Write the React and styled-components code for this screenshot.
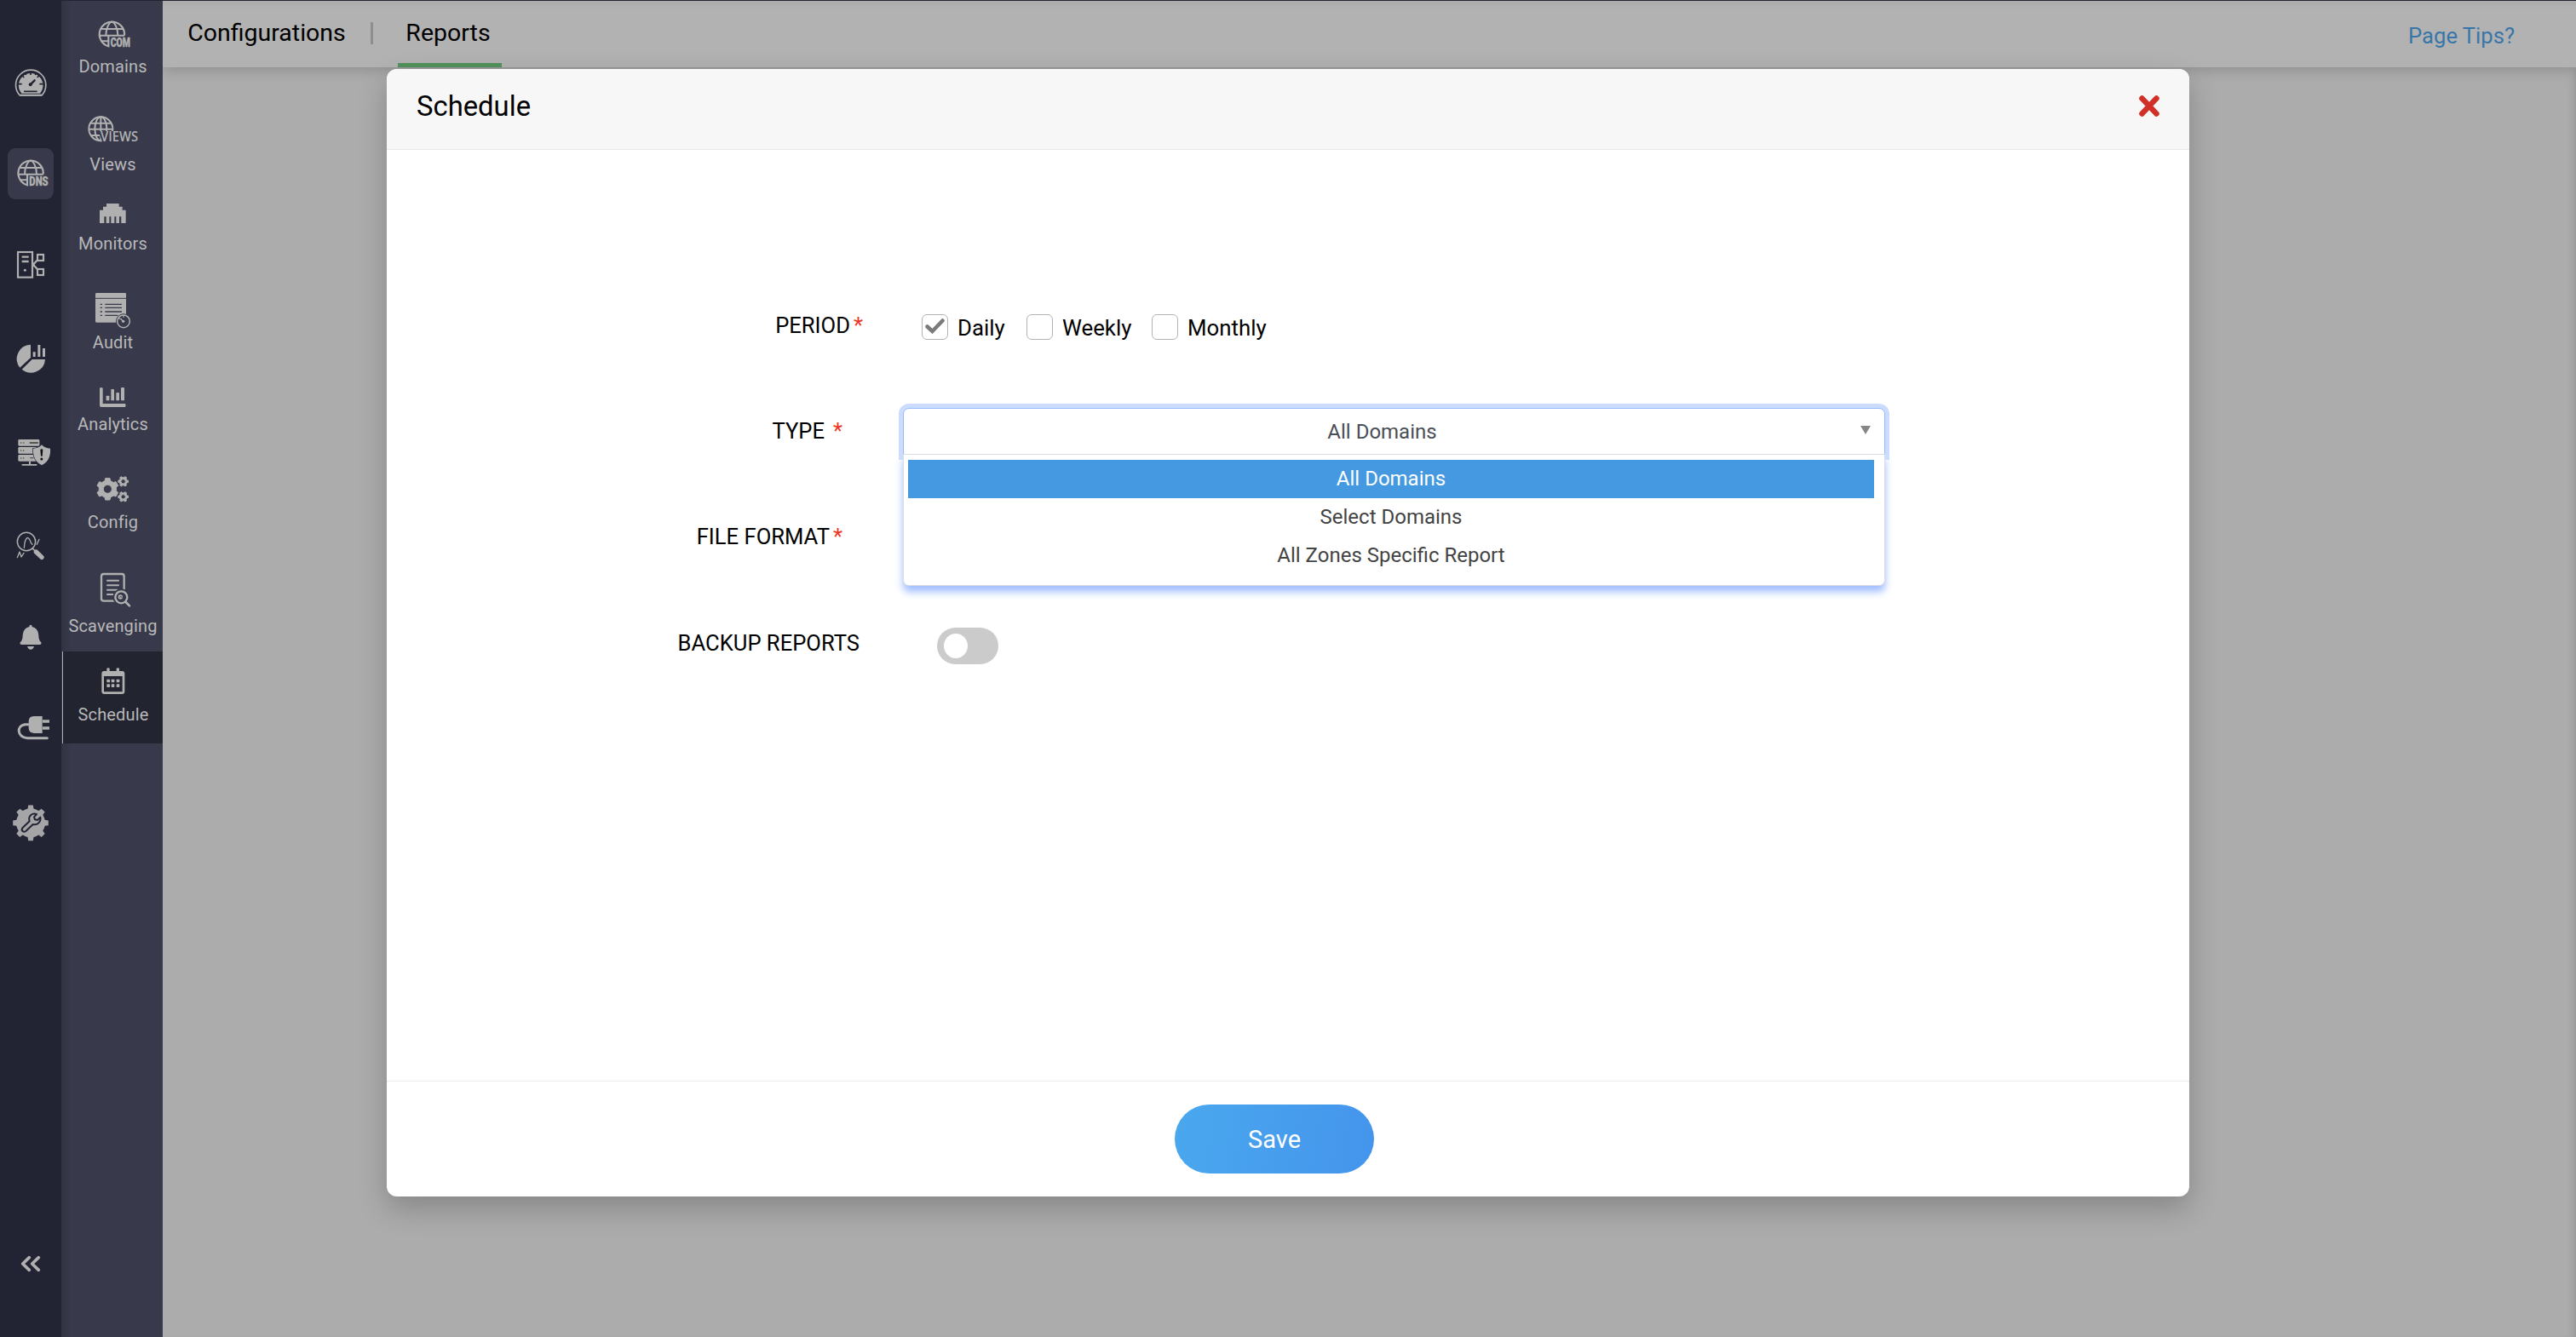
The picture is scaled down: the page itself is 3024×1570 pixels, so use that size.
import React from "react";
import styled, { createGlobalStyle, css } from "styled-components";

const FG = "#b0b0b0";
const RAIL = "#222434";
const PANEL = "#383a4b";
const ACTIVE = "#22242f";

const GlobalStyle = createGlobalStyle`
  *, *::before, *::after { box-sizing: border-box; }
  html, body { margin: 0; padding: 0; }
  body { font-family: Roboto, "Liberation Sans", sans-serif; background: #acacac; overflow: hidden; }
`;

const Shell = styled.div`
  display: flex;
  width: 3024px;
  height: 1570px;
  border-top: 1px solid ${RAIL};
  background: #acacac;
  overflow: hidden;
`;

/* ---------- navigation ---------- */
const Rail = styled.nav`
  display: flex;
  flex-direction: column;
  flex: none;
  width: 72px;
  padding: 0 9px 56px;
  background: ${RAIL};
`;

const RailButton = styled.div`
  display: flex;
  align-items: center;
  justify-content: center;
  flex: none;
  height: 60px;
  margin-top: ${(p) => p.$gap};
  border-radius: 9px;
  background: ${(p) => (p.$active ? PANEL : "transparent")};
`;

const RailGlyph = styled.svg`
  display: block;
  flex: none;
  width: 48px;
  height: 48px;
  overflow: visible;
`;

const Panel = styled.nav`
  display: flex;
  flex-direction: column;
  flex: none;
  width: 119px;
  background: linear-gradient(to right, #313343, ${PANEL} 11px);
`;

const PanelItem = styled.div`
  display: flex;
  flex-direction: column;
  align-items: center;
  flex: none;
  height: ${(p) => p.$height}px;
  padding-top: ${(p) => p.$top}px;
  padding-left: 1px;
  ${(p) =>
    p.$active &&
    css`
      margin-left: 1px;
      padding-left: 0;
      border-left: 1px solid ${FG};
      background: ${ACTIVE};
    `}
`;

const PanelGlyph = styled.svg`
  display: block;
  flex: none;
  width: 60px;
  height: ${(p) => p.$h}px;
  overflow: visible;
`;

const PanelLabel = styled.span`
  margin-top: ${(p) => p.$gap}px;
  padding-left: 1px;
  font-size: 20px;
  line-height: 24px;
  letter-spacing: 0.15px;
  white-space: nowrap;
  color: #b8b8b9;
`;

/* ---------- page ---------- */
const Page = styled.div`
  display: flex;
  flex-direction: column;
  flex: 1;
  min-width: 0;
  box-shadow: inset -8px 0 10px -6px rgba(0, 0, 0, 0.14);
`;

const TopBar = styled.header`
  display: flex;
  align-items: flex-start;
  height: 78px;
  padding: 0 72px 0 28px;
  background: linear-gradient(to bottom, #acacac, #b2b2b2 10px);
  box-shadow: 0 2px 16px rgba(0, 0, 0, 0.2);
  clip-path: inset(0 0 -40px 0);
`;

const Tab = styled.a`
  display: flex;
  justify-content: center;
  width: ${(p) => p.$width}px;
  height: 78px;
  padding-top: 21px;
  padding-right: ${(p) => (p.$active ? 4 : 0)}px;
  font-size: 28.5px;
  line-height: 34px;
  white-space: nowrap;
  color: #000;
  border-bottom: ${(p) => (p.$active ? "5px solid #52925b" : "none")};
`;

const Separator = styled.span`
  width: 3px;
  height: 26px;
  margin: 25px 29px 0 28px;
  background: #8e8e8e;
`;

const TipsLink = styled.a`
  margin: 26px 0 0 auto;
  font-size: 25.6px;
  line-height: 30px;
  color: #3876a9;
`;

/* ---------- dialog ---------- */
const DialogLayer = styled.div`
  position: absolute;
  inset: 0 auto auto 0;
  display: flex;
  justify-content: center;
  width: 3024px;
  height: 1570px;
  padding-top: 81px;
`;

const Dialog = styled.section`
  display: flex;
  flex-direction: column;
  width: 2116px;
  height: 1324px;
  border-radius: 12px;
  background: #fff;
  box-shadow: 0 14px 34px rgba(0, 0, 0, 0.22);
`;

const DialogHeader = styled.header`
  display: flex;
  justify-content: space-between;
  height: 95px;
  padding: 25px 35px 0 35px;
  border-bottom: 1px solid #e9e9e9;
  border-radius: 12px 12px 0 0;
  background: #f7f7f7;
`;

const DialogTitle = styled.h1`
  margin: 0;
  font-size: 32.8px;
  font-weight: 400;
  line-height: 38px;
  color: #000;
`;

const CloseGlyph = styled.svg`
  width: 24px;
  height: 25px;
  margin-top: 6px;
`;

const DialogBody = styled.div`
  flex: 1;
  padding-top: 191px;
`;

const FormRow = styled.div`
  display: flex;
  align-items: flex-start;
  height: ${(p) => p.$height || 124}px;
`;

const FieldLabel = styled.label`
  display: flex;
  justify-content: flex-end;
  gap: ${(p) => p.$gap || 0}px;
  flex: none;
  width: 606px;
  padding-right: ${(p) => p.$end}px;
  font-size: 25.6px;
  line-height: 30px;
  white-space: nowrap;
  color: #000;
`;

const Required = styled.span`
  color: #ee3524;
`;

const Options = styled.div`
  display: flex;
  padding: 2px 0 0 22px;
`;

const Option = styled.label`
  display: flex;
  gap: 11px;
  width: ${(p) => p.$width}px;
  font-size: 25.8px;
  line-height: 32px;
  color: #000;
`;

const CheckBox = styled.span`
  display: flex;
  align-items: center;
  justify-content: center;
  flex: none;
  width: 31px;
  height: 30px;
  border: 1px solid #b3b3b3;
  border-radius: 6px;
  background: #fff;
`;

const CheckGlyph = styled.svg`
  width: 23px;
  height: 18px;
  margin-top: -2px;
`;

const Select = styled.div`
  position: relative;
  display: flex;
  align-items: center;
  width: 1153px;
  height: 56px;
  margin-top: -12px;
  padding: 0 16px 0 0;
  border: 1px solid #94b8fb;
  border-radius: 7px 7px 0 0;
  background: #fff;
  box-shadow: 0 0 0 5px #cbdcff;
`;

const SelectValue = styled.span`
  flex: 1;
  font-size: 24px;
  line-height: 30px;
  text-align: center;
  color: #4a4e57;
`;

const Caret = styled.span`
  width: 0;
  height: 0;
  margin-bottom: 5px;
  border: 6.5px solid transparent;
  border-top: 10px solid #868686;
  border-bottom: 0;
`;

const Menu = styled.ul`
  position: absolute;
  top: 53px;
  left: -1px;
  width: 1153px;
  height: 155px;
  margin: 0;
  padding: 6px 12px 0 5px;
  list-style: none;
  border: 1px solid #d9dce2;
  border-radius: 0 0 7px 7px;
  background: #fff;
  box-shadow: 0 7px 10px rgba(50, 115, 250, 0.47);
  clip-path: polygon(0 0, 100% 0, 100% 7px, 120% 7px, 120% 140%, -20% 140%, -20% 7px, 0 7px);
`;

const MenuItem = styled.li`
  height: 45px;
  padding-top: 7px;
  font-size: 24px;
  line-height: 30px;
  text-align: center;
  color: ${(p) => (p.$selected ? "#fff" : "#444")};
  background: ${(p) => (p.$selected ? "#4499e0" : "transparent")};
`;

const Toggle = styled.span`
  display: flex;
  align-items: center;
  width: 72px;
  height: 43px;
  margin: -3px 0 0 40px;
  padding-left: 8px;
  border-radius: 22px;
  background: #cbcbcb;
`;

const Knob = styled.span`
  width: 28px;
  height: 29px;
  border-radius: 50%;
  background: #fff;
`;

const DialogFooter = styled.footer`
  display: flex;
  justify-content: center;
  height: 136px;
  padding: 27px 32px 0 0;
  border-top: 1px solid #ececec;
`;

const SaveButton = styled.button`
  width: 234px;
  height: 81px;
  padding: 0;
  border: 0;
  border-radius: 41px;
  background: linear-gradient(100deg, #4aa8ee, #4494ec);
  font: 400 29px/34px Roboto, "Liberation Sans", sans-serif;
  color: #fff;
`;

/* ---------- drawings ---------- */
function gearPath(cx, cy, outer, inner, teeth, wide = 0.3, narrow = 0.2, start = -Math.PI / 2) {
  const step = (Math.PI * 2) / teeth;
  const pts = [];
  for (let i = 0; i < teeth; i++) {
    const a = start + i * step;
    [
      [inner, -wide],
      [outer, -narrow],
      [outer, narrow],
      [inner, wide],
    ].forEach(([r, k]) => {
      pts.push(`${(cx + r * Math.cos(a + k * step)).toFixed(1)} ${(cy + r * Math.sin(a + k * step)).toFixed(1)}`);
    });
  }
  return `M${pts.join("L")}Z`;
}

function hole(cx, cy, r) {
  return `M${cx - r} ${cy}a${r} ${r} 0 1 0 ${2 * r} 0a${r} ${r} 0 1 0 ${-2 * r} 0Z`;
}

const GaugeIcon = () => (
  <RailGlyph viewBox="36 216 144 144">
    <path d="M70 336A53 53 0 1 1 147 336Z" fill={RAIL} stroke={FG} strokeWidth="5" strokeLinejoin="round" />
    <path d="M76 329A43 43 0 1 1 141 329Z" fill={FG} />
    <g stroke={RAIL} strokeWidth="5">
      <path d="M108 252v12M64 296h13M152 296h-13M77 265l8 8M139 265l-8 8M88 256l4 8M128 256l-4 8" />
      <path d="M84 322h47" strokeWidth="5" />
      <path d="M107 298L122 283" strokeWidth="7" strokeLinecap="round" />
    </g>
    <circle cx="107" cy="298" r="6" fill={RAIL} />
    <path d="M70 335H147" stroke={FG} strokeWidth="6" />
  </RailGlyph>
);

const GlobeLines = ({ cx, cy, r }) => (
  <g fill="none" stroke={FG} strokeWidth="6">
    <path d={`M${cx + r} ${cy + 4}A${r} ${r} 0 1 0 ${cx - 12} ${cy + r - 2}V${cy + 4}`} strokeWidth="6.500" />
    <path d={`M${cx - r + 5} ${cy - 19}H${cx + r - 5}M${cx - r} ${cy + 4}H${cx + r}M${cx - r + 5} ${cy + 24}H${cx - 12}`} />
    <path d={`M${cx - 21} ${cy + 4}C${cx - 21} ${cy - 20} ${cx - 10} ${cy - r} ${cx} ${cy - r}S${cx + 21} ${cy - 20} ${cx + 21} ${cy + 4}`} />
  </g>
);

const DnsIcon = () => (
  <RailGlyph viewBox="36 540 144 144">
    <GlobeLines cx={108} cy={610} r={44} />
    <text x="103" y="655" textLength="67" lengthAdjust="spacingAndGlyphs" fontFamily="Roboto" fontWeight="900" fontSize="42" fill={FG} stroke={FG} strokeWidth="1">DNS</text>
  </RailGlyph>
);

const ServerIcon = () => (
  <RailGlyph viewBox="36 861 144 144">
    <g fill="none" stroke={FG} strokeWidth="6.500">
      <rect x="63" y="888" width="51" height="89" />
      <path d="M77 905h24M77 921h24" strokeWidth="7" />
      <rect x="132" y="897" width="21" height="21" />
      <rect x="132" y="948" width="21" height="21" />
      <path d="M132 916L117 932L132 949" />
    </g>
    <path d="M112 914l10 18l-10 18Z" fill={FG} />
    <circle cx="88" cy="952" r="4.5" fill={FG} />
  </RailGlyph>
);

const PieIcon = () => (
  <RailGlyph viewBox="36 111 144 144">
    <path d="M108 134V180L70 215A50 50 0 0 1 108 134Z" fill={FG} />
    <path d="M113 186H159A50 50 0 0 1 77 221Z" fill={FG} />
    <path d="M116 160h9v17h-9ZM133 135h9v42h-9ZM150 147h9v30h-9Z" fill={FG} />
  </RailGlyph>
);

const ShieldServerIcon = () => (
  <RailGlyph viewBox="36 441 144 144">
    <g fill={FG}>
      <rect x="64" y="468" width="75" height="23" rx="4" />
      <rect x="64" y="495" width="75" height="23" rx="4" />
      <rect x="64" y="522" width="75" height="23" rx="4" />
      <path d="M102 545h6v10h22v5H77v-5h25Z" />
    </g>
    <path d="M106 480h27" stroke="#3a3a32" strokeWidth="5" strokeLinecap="round" />
    <g fill="#55554f">
      <path d="M72 478h4v4h-4ZM81 478h4v4h-4ZM72 505h4v4h-4ZM81 505h4v4h-4ZM72 532h4v4h-4ZM81 532h4v4h-4Z" />
      <path d="M106 531h12v4h-12Z" />
    </g>
    <path d="M147 487Q160 500 177 500Q180 542 147 559Q114 542 117 500Q134 500 147 487Z" fill={FG} stroke={RAIL} strokeWidth="4" paintOrder="stroke" />
    <path d="M142 504q5 -4 9 0l-2 23h-5Z" fill="#111" />
    <circle cx="146.500" cy="537" r="4.500" fill="#111" />
  </RailGlyph>
);

const InspectIcon = () => (
  <RailGlyph viewBox="36 771 144 144">
    <g fill="none" stroke={FG} strokeWidth="4.500" strokeLinecap="round" strokeLinejoin="round">
      <circle cx="93" cy="828" r="32" />
      <path d="M61 884l8 -20l6 18l9 -14M85 850q2 -32 12 -36q7 2 12 18l5 6M130 838l8 -18" strokeWidth="4" />
      <path d="M114 852l12 11" strokeWidth="5" />
      <path d="M127 864L147 883" strokeWidth="16" />
    </g>
  </RailGlyph>
);

const BellIcon = () => (
  <RailGlyph viewBox="36 192 144 144">
    <path d="M108 221q5 0 5 7q22 5 23 30q0 18 9 25q2 8 -5 8H76q-7 0 -5 -8q9 -7 9 -25q1 -25 23 -30q0 -7 5 -7Z" fill={FG} />
    <path d="M96 297h24q-3 11 -12 11t-12 -11Z" fill={FG} />
  </RailGlyph>
);

const PlugIcon = () => (
  <RailGlyph viewBox="36 513 144 144">
    <path d="M149 543v60h-30q-18 -2 -18 -18v-24q0 -18 18 -18Z" fill={FG} />
    <path d="M150 561h24M150 585h24" stroke={FG} strokeWidth="11" />
    <path d="M103 572H90C56 574 60 619 96 620H166" fill="none" stroke={FG} strokeWidth="9" strokeLinecap="round" />
  </RailGlyph>
);

const SettingsIcon = () => (
  <RailGlyph viewBox="36 849 144 144">
    <path d={gearPath(108, 919, 63, 50, 8, 0.27, 0.17)} fill="#a5a5a7" />
    <circle cx="108" cy="919" r="51" fill="#a5a5a7" />
    <path
      d="M79 937L104 913C98 895 113 883 129 888L120 898L123 907L132 909L142 899C145 916 131 928 116 924L91 948C83 954 73 946 79 937Z"
      fill="#a5a5a7"
      stroke={RAIL}
      strokeWidth="6"
      strokeLinejoin="round"
    />
  </RailGlyph>
);

const CollapseIcon = () => (
  <RailGlyph viewBox="36 90 144 144">
    <path d="M103 140L80 162L103 184M136 140L113 162L136 184" fill="none" stroke={FG} strokeWidth="11" strokeLinecap="round" strokeLinejoin="round" />
  </RailGlyph>
);

const DomainsIcon = () => (
  <PanelGlyph $h={32} viewBox="306 75 180 96">
    <GlobeLines cx={394} cy={121} r={44} />
    <text x="389" y="166" textLength="70" lengthAdjust="spacingAndGlyphs" fontFamily="Roboto" fontWeight="900" fontSize="42" fill={FG} stroke={FG} strokeWidth="1">COM</text>
  </PanelGlyph>
);

const ViewsIcon = () => (
  <PanelGlyph $h={32} viewBox="306 408 180 96">
    <g fill="none" stroke={FG} strokeWidth="6">
      <circle cx="355" cy="454" r="42" />
      <ellipse cx="355" cy="454" rx="21" ry="42" />
      <path d="M355 412V496M318 434H392M313 455H397M318 477H392" />
    </g>
    <path d="M346 462H486V504H362Z" fill={PANEL} />
    <text x="354" y="499" textLength="132" lengthAdjust="spacingAndGlyphs" fontFamily="Open Sans, Noto Sans" fontWeight="600" fontSize="47" fill={FG}>VIEWS</text>
  </PanelGlyph>
);

const MonitorsIcon = () => (
  <PanelGlyph $h={23} viewBox="306 717 180 69">
    <path
      d="M351 786V740H363V728H375V717H419V728H431V740H443V786H427V763H420V786H409V763H403V786H391V763H385V786H374V763H367V786Z"
      fill={FG}
    />
  </PanelGlyph>
);

const AuditIcon = () => (
  <PanelGlyph $h={42} viewBox="306 1032 180 126">
    <rect x="336" y="1032" width="108" height="104" rx="4" fill={FG} />
    <path d="M336 1051H444" stroke={PANEL} strokeWidth="3" />
    <path d="M353 1072h7M353 1084h7M353 1098h7M353 1111h7M370 1072h59M370 1084h59M370 1098h59M370 1111h45" stroke={PANEL} strokeWidth="4" />
    <circle cx="435" cy="1132" r="27" fill={PANEL} />
    <circle cx="435" cy="1132" r="22" fill={PANEL} stroke={FG} strokeWidth="4.500" />
    <path d="M435 1133l-11 -11M435 1110v8M418 1120l4 4" stroke={FG} strokeWidth="4" />
    <circle cx="434" cy="1132" r="5" fill={FG} />
  </PanelGlyph>
);

const AnalyticsIcon = () => (
  <PanelGlyph $h={23} viewBox="306 285 180 69">
    <g fill={FG}>
      <path d="M351 287q5 -4 11 0V342H441q4 6 0 12H357q-6 0 -6 -6Z" />
      <rect x="374" y="314" width="11" height="17" rx="2" />
      <rect x="391" y="291" width="11" height="40" rx="2" />
      <rect x="409" y="303" width="11" height="28" rx="2" />
      <rect x="426" y="285" width="12" height="46" rx="2" />
    </g>
  </PanelGlyph>
);

const ConfigIcon = () => (
  <PanelGlyph $h={32} viewBox="306 597 180 96">
    <g fill={FG} stroke={FG} strokeWidth="3" strokeLinejoin="round" fillRule="evenodd">
      <path d={gearPath(379, 643, 39, 31, 6, 0.3, 0.2) + hole(379, 643, 15)} />
      <path d={gearPath(434, 616, 18, 14, 6, 0.28, 0.19, 0) + hole(434, 616, 8)} />
      <path d={gearPath(434, 670, 18, 14, 6, 0.28, 0.19, 0) + hole(434, 670, 8)} />
    </g>
  </PanelGlyph>
);

const ScavengingIcon = () => (
  <PanelGlyph $h={41} viewBox="306 36 180 123">
    <g fill="none" stroke={FG} strokeWidth="7" strokeLinecap="round">
      <rect x="357" y="42" width="80" height="95" rx="8" />
      <path d="M378 65h39M378 82h39M378 98h34M378 114h20" strokeWidth="6" />
      <circle cx="427" cy="124" r="24" stroke={PANEL} strokeWidth="12" fill={PANEL} />
      <circle cx="427" cy="124" r="21" />
      <path d="M443 141L456 154" strokeWidth="8" />
    </g>
    <circle cx="424" cy="123" r="8" fill={FG} />
    <path d="M421 124q5 -6 9 1" stroke={PANEL} strokeWidth="3" fill="none" />
  </PanelGlyph>
);

const CalendarIcon = () => (
  <PanelGlyph $h={31} viewBox="308 372 180 93">
    <rect x="361" y="388" width="73" height="73" rx="5" fill="none" stroke={FG} strokeWidth="8" />
    <path d="M361 386h73v16h-73Z" fill={FG} />
    <path d="M375 374q5 -3 10 0v14h-10ZM409 374q5 -3 10 0v14h-10Z" fill={FG} />
    <g fill={FG}>
      {[375, 391, 409].map((x) =>
        [413, 430].map((y) => <rect key={`${x}-${y}`} x={x} y={y} width="11" height="11" rx="2" />)
      )}
    </g>
  </PanelGlyph>
);

const railItems = [
  { Icon: GaugeIcon, gap: 65 },
  { Icon: DnsIcon, gap: 48, active: true },
  { Icon: ServerIcon, gap: 47 },
  { Icon: PieIcon, gap: 50 },
  { Icon: ShieldServerIcon, gap: 50 },
  { Icon: InspectIcon, gap: 50 },
  { Icon: BellIcon, gap: 47 },
  { Icon: PlugIcon, gap: 47 },
  { Icon: SettingsIcon, gap: 52 },
];

const panelItems = [
  { label: "Domains", Icon: DomainsIcon, top: 24, gap: 9, height: 109 },
  { label: "Views", Icon: ViewsIcon, top: 26, gap: 13, height: 110 },
  { label: "Monitors", Icon: MonitorsIcon, top: 19, gap: 12, height: 100 },
  { label: "Audit", Icon: AuditIcon, top: 24, gap: 4, height: 110 },
  { label: "Analytics", Icon: AnalyticsIcon, top: 25, gap: 8, height: 100 },
  { label: "Config", Icon: ConfigIcon, top: 29, gap: 10, height: 110 },
  { label: "Scavenging", Icon: ScavengingIcon, top: 32, gap: 10, height: 125 },
  { label: "Schedule", Icon: CalendarIcon, top: 19, gap: 12, height: 108, active: true },
];

const periods = [
  { label: "Daily", width: 123, checked: true },
  { label: "Weekly", width: 147 },
  { label: "Monthly", width: 150 },
];

const types = ["All Domains", "Select Domains", "All Zones Specific Report"];

export default function App() {
  return (
    <>
      <GlobalStyle />
      <Shell>
        <Rail>
          {railItems.map(({ Icon, gap, active }, i) => (
            <RailButton key={i} $gap={`${gap}px`} $active={active}>
              <Icon />
            </RailButton>
          ))}
          <RailButton $gap="auto">
            <CollapseIcon />
          </RailButton>
        </Rail>
        <Panel>
          {panelItems.map(({ label, Icon, top, gap, height, active }) => (
            <PanelItem key={label} $top={top} $height={height} $active={active}>
              <Icon />
              <PanelLabel $gap={gap}>{label}</PanelLabel>
            </PanelItem>
          ))}
        </Panel>
        <Page>
          <TopBar>
            <Tab $width={188}>Configurations</Tab>
            <Separator />
            <Tab $width={122} $active>Reports</Tab>
            <TipsLink>Page Tips?</TipsLink>
          </TopBar>
        </Page>
      </Shell>
      <DialogLayer>
        <Dialog>
          <DialogHeader>
            <DialogTitle>Schedule</DialogTitle>
            <CloseGlyph viewBox="0 0 24 25">
              <path d="M3.500 3.500L20.500 21.500M20.500 3.500L3.500 21.500" stroke="#d03027" strokeWidth="6.500" strokeLinecap="round" />
            </CloseGlyph>
          </DialogHeader>
          <DialogBody>
            <FormRow>
              <FieldLabel $end={47} $gap={4}>PERIOD<Required>*</Required></FieldLabel>
              <Options>
                {periods.map(({ label, width, checked }) => (
                  <Option key={label} $width={width}>
                    <CheckBox>
                      {checked && (
                        <CheckGlyph viewBox="0 0 23 18">
                          <path d="M2.500 9.500L8.500 15L20.500 2.500" fill="none" stroke="#7b7b7b" strokeWidth="4.500" strokeLinecap="round" />
                        </CheckGlyph>
                      )}
                    </CheckBox>
                    {label}
                  </Option>
                ))}
              </Options>
            </FormRow>
            <FormRow>
              <FieldLabel $end={71} $gap={10}>TYPE<Required>*</Required></FieldLabel>
              <Select>
                <SelectValue>All Domains</SelectValue>
                <Caret />
                <Menu>
                  {types.map((type, i) => (
                    <MenuItem key={type} $selected={i === 0}>{type}</MenuItem>
                  ))}
                </Menu>
              </Select>
            </FormRow>
            <FormRow $height={125}>
              <FieldLabel $end={71} $gap={4}>FILE FORMAT<Required>*</Required></FieldLabel>
            </FormRow>
            <FormRow>
              <FieldLabel $end={51}>BACKUP REPORTS</FieldLabel>
              <Toggle>
                <Knob />
              </Toggle>
            </FormRow>
          </DialogBody>
          <DialogFooter>
            <SaveButton>Save</SaveButton>
          </DialogFooter>
        </Dialog>
      </DialogLayer>
    </>
  );
}
